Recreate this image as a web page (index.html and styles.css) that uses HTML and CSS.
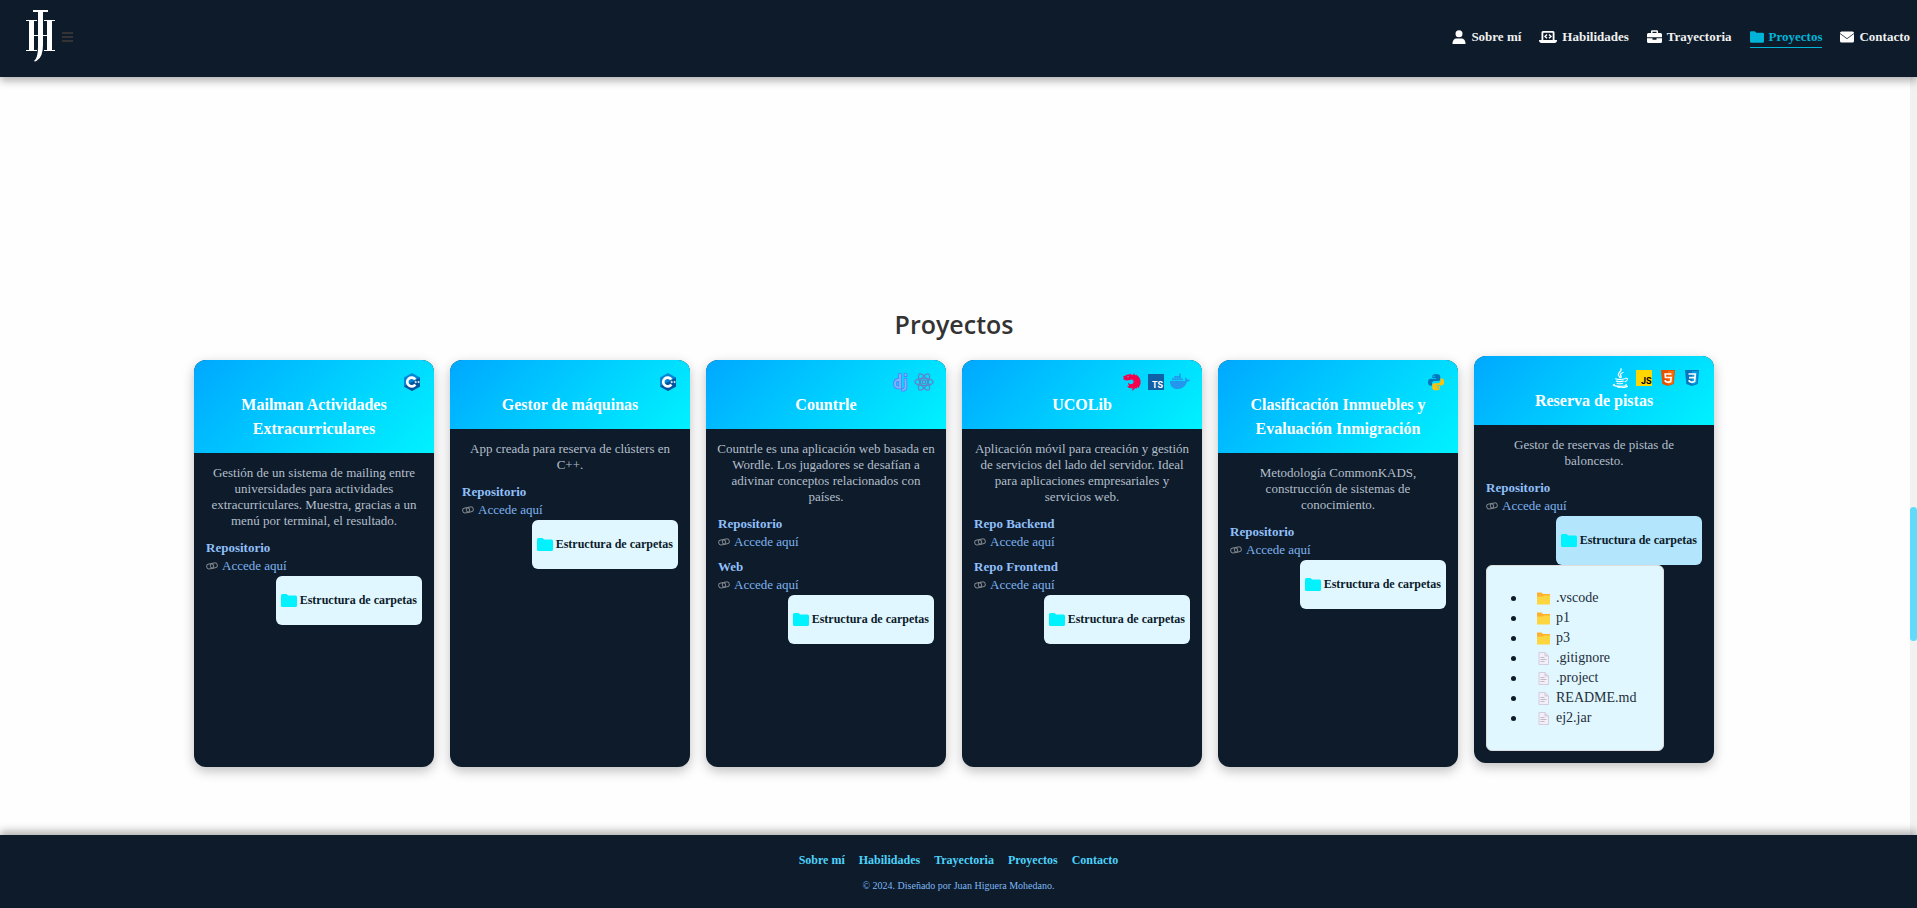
FILE: index.html
```html
<!DOCTYPE html>
<html lang="es">
<head>
<meta charset="utf-8">
<meta name="viewport" content="width=device-width, initial-scale=1">
<title>Proyectos</title>
<link rel="stylesheet" href="styles.css">
</head>
<body>
<svg class="sprite" aria-hidden="true">
  <symbol id="link" viewBox="0 0 12 8"><g fill="none" stroke="#84898e" stroke-width="1"><rect x=".6" y="1.8" width="7" height="5" rx="2.5" transform="rotate(-8 4 4)"/><rect x="4.4" y="1" width="7" height="5" rx="2.5" transform="rotate(-8 8 4)"/></g></symbol>
  <symbol id="folder" viewBox="0 0 16 13"><path d="M1.5 0h4l1.7 1.5h7.3A1.5 1.5 0 0 1 16 3v8.500a1.500 1.500 0 0 1-1.500 1.500h-13A1.500 1.500 0 0 1 0 11.500v-10A1.500 1.500 0 0 1 1.500 0z" fill="currentColor"/></symbol>
  <symbol id="dir" viewBox="0 0 13 13"><path d="M0 .500h4.500L6 2H13v4H0z" fill="#ffb02e"/><path d="M0 4.500h5.500L7 3.500h6v9H0z" fill="#fcd53f"/></symbol>
  <symbol id="file" viewBox="0 0 13 13"><path d="M2 .5h6L11.500 4v8.500H2z" fill="#f3eef8" stroke="#cdc4d6" stroke-width=".8"/><path d="M8 .5V4h3.500" fill="#e1d8ec" stroke="#cdc4d6" stroke-width=".8"/><path d="M3.500 5.500h4M3.500 7.500h6M3.500 9.500h4" stroke="#b4acbc" stroke-width=".8"/></symbol>
  <symbol id="cpp" viewBox="0 0 20 20"><path d="M10 1l8 4.500v9L10 19l-8-4.500v-9z" fill="#0086d4"/><path d="M18 5.500v9L10 19l-8-4.500L10 10z" fill="#00549d"/><path d="M13.300 7.600a4.400 4.400 0 1 0 0 4.800" fill="none" stroke="#fff" stroke-width="2.700"/><path d="M12.500 10h2.400M13.700 8.800v2.400M15.500 10h2.200M16.600 8.900v2.200" stroke="#fff" stroke-width=".8"/></symbol>
  <symbol id="react" viewBox="0 0 20 20"><g fill="none" stroke="#5f84c8" stroke-width="1.300"><ellipse cx="10" cy="10" rx="9.200" ry="3.700"/><ellipse cx="10" cy="10" rx="9.200" ry="3.700" transform="rotate(60 10 10)"/><ellipse cx="10" cy="10" rx="9.200" ry="3.700" transform="rotate(120 10 10)"/><circle cx="10" cy="10" r="1.800"/></g></symbol>
  <symbol id="django" viewBox="0 0 20 20"><g fill="none" stroke-linecap="square"><g stroke="#5b7cff" stroke-width="3.600"><path d="M10 3v12.500H7.500a4 4 0 0 1 0-7.500H9M15.500 8v7.500q0 2-2.500 2.300M15.500 3v.1"/></g><g stroke="#79b8ff" stroke-width="1.800"><path d="M10 3v12.500H7.500a4 4 0 0 1 0-7.500H9M15.500 8v7.500q0 2-2.500 2.300M15.500 3v.1"/></g></g></symbol>
  <symbol id="nest" viewBox="0 0 20 20"><path d="M11.800 1c.8.600 1 1.200.800 1.900l1.600.3.900-.7.200 1.300c1.900 1.100 3.200 3.200 3.300 5.700.1 3-1 5.400-3 7l.4-1.900-2.300 2.700.2-1.700c-1.300 1.600-2.400 2.600-4.200 3.200.8-1 1-1.900.6-2.800-1.900.8-4.400.1-5.400-2.200.8.500 1.600.5 2.300 0-1-.8-1.300-2.100-.7-3.200.9 1.700 2.400 2 4 1.100 1.200-.7 1.500-2 .5-3.400-.5-.7-1.400-.8-2.300-.6C6.800 8.200 4.800 9 2.600 8L1 6.300l1.200-.5L.8 4.400C3 4.100 4 2.900 6.200 2.300l1.600.2 1-1 .6 1.400c1.700.2 2.600-.4 2.400-1.900z" fill="#f5004d"/><circle cx="6" cy="4.800" r=".7" fill="#00d5ff"/></symbol>
  <symbol id="docker" viewBox="0 0 20 20"><path d="M0 9h15.300c0-1.500-.3-2.500.3-3.700 1 .7 1.400 1.400 1.500 2.400 1-.2 2-.1 2.900.4-.6 1.100-1.600 1.700-3 1.700C15.500 14 12.500 17 7.500 17 3 17 0 14.500 0 9z" fill="#2496ed"/><path d="M2 7.300h11M4.400 5h6.500M9 2.800h2.100" stroke="#2496ed" stroke-width="1.900" stroke-dasharray="2 .2"/></symbol>
  <symbol id="python" viewBox="0 0 20 20"><path d="M10 2C7 2 6.300 3 6.300 4.400V6H10v.8H4.600C3 6.800 2 8 2 10.300s1 3.400 2.400 3.400H6V11.600C6 10 7 9 8.500 9h3.700c1.300 0 2-.8 2-2V4.400C14.200 2.900 13 2 10 2z" fill="#0277bd"/><path d="M10 18.300c3 0 4-1 4-2.400v-1.600h-3.700v-.8h5.300c1.600 0 2.600-1.200 2.600-3.500s-1-3.400-2.400-3.400h-1.300v2.200c0 1.600-1 2.500-2.500 2.500H8.300c-1.300 0-2 .8-2 2v2.600c0 1.500 1.200 2.400 3.700 2.400z" fill="#ffc107"/><circle cx="8" cy="4.200" r=".8" fill="#08d0ff"/><circle cx="12.200" cy="16" r=".8" fill="#08d0ff"/></symbol>
  <symbol id="java" viewBox="0 0 20 20"><g fill="none" stroke="#fff" stroke-linecap="round"><path d="M11 .8c1 2.500-3.500 4-2.600 6.200.3.900 1.200 1.600 1.500 2.600M13 4.500c-2 .8-3 1.800-2.200 3.100.5.900.5 1.400 0 2" stroke-width="1.300"/><path d="M6 10.500c-1.500.9 6 1.400 8.500.3M6.300 13c1 .8 5 .8 7.200.1M7 15.200c1.400.7 4 .6 5.700 0M15.500 10.300c3-.5 2.300 2.600-.6 3.400M4.500 16.300c-4 1.200 3 2.300 7.500 2 4-.2 5.500-1.200 4-1.900M8 19.600c4 .4 8-.2 9.500-1.300" stroke-width="1.100"/></g></symbol>
  <symbol id="html" viewBox="0 0 20 20"><path d="M3 2h14l-1.300 14L10 18l-5.700-2z" fill="#e65100"/><path d="M10 3h6l-1.200 12.200L10 17z" fill="#ff6d00"/><path d="M13.500 6H7.200l.3 3.500h5.600l-.4 4-2.700.9-2.600-.9-.1-1.500" fill="none" stroke="#fff" stroke-width="1.700"/></symbol>
  <symbol id="css" viewBox="0 0 20 20"><path d="M3 2h14l-1.300 14L10 18l-5.700-2z" fill="#0277bd"/><path d="M10 3h6l-1.200 12.200L10 17z" fill="#039be5"/><path d="M6.500 6h6.800l-.7 7.500-2.600.9-2.600-.9-.1-1.500M7 9.600h6" fill="none" stroke="#fff" stroke-width="1.700"/></symbol>
</svg>

<header class="topbar">
  <div class="brand">
    <svg class="logo" viewBox="0 0 30 54" role="img" aria-label="JH">
      <g fill="#fff"><rect x="3" y="11" width="5" height="30"/><rect x="21" y="11" width="5" height="30"/><rect x="0" y="10" width="11" height="1"/><rect x="18" y="10" width="11" height="1"/><rect x="0" y="40" width="11" height="1"/><rect x="18" y="40" width="11" height="1"/><rect x="7" y="25" width="15" height="1"/><rect x="7" y="0" width="15" height="2"/></g>
      <path d="M12 1h5v34q0 12-6 15.500-2 1.500-3 .5 4-3 4-14z" fill="#fff"/>
    </svg>
    <button class="menu" aria-label="Menú"><span></span><span></span><span></span></button>
  </div>
  <nav class="nav" aria-label="Principal">
    <a href="#sobre-mi"><svg width="14" height="14" viewBox="0 0 14 14"><circle cx="7" cy="3.700" r="3.500"/><path d="M.5 14c0-4 2-5.500 4-5.500h5c2 0 4 1.500 4 5.500z"/></svg>Sobre mí</a>
    <a href="#habilidades"><svg width="18" height="14" viewBox="0 0 18 14"><path fill-rule="evenodd" d="M2.500 2.500A1.500 1.500 0 0 1 4 1h10a1.500 1.500 0 0 1 1.500 1.500V10H18q0 3-2.500 3h-13Q0 13 0 10h2.500zM4.300 2.800V10h9.400V2.800z"/><path d="M8 4.500L6 6.400l2 1.900M10 4.500l2 1.900-2 1.900" fill="none" stroke="#fff" stroke-width="1.400"/></svg>Habilidades</a>
    <a href="#trayectoria"><svg width="15" height="14" viewBox="0 0 15 14"><path fill-rule="evenodd" d="M4 3V1.500Q4 .3 5.200.3h4.600Q11 .3 11 1.500V3h2.500Q15 3 15 4.500V7.300H0V4.500Q0 3 1.500 3zM5.500 3h4V1.700h-4z"/><path d="M0 8.300h5.500v1.500h4V8.300H15v3.200q0 1.500-1.500 1.500h-12Q0 13 0 11.500z"/></svg>Trayectoria</a>
    <a href="#proyectos" class="active" aria-current="page"><svg width="14" height="12"><use href="#folder"/></svg>Proyectos</a>
    <a href="#contacto"><svg width="14" height="14" viewBox="0 0 14 14"><rect y="1.500" width="14" height="11" rx="1.500"/><path d="M0 3.500l7 5.200 7-5.200" fill="none" stroke="#0d1b2a" stroke-width=".8"/></svg>Contacto</a>
  </nav>
</header>

<div class="page">
  <main class="content" id="proyectos">
    <h1 class="heading">Proyectos</h1>
    <div class="cards">
      <article class="card">
        <div class="card-head"><div class="techs"><svg><use href="#cpp"/></svg></div><h2>Mailman Actividades Extracurriculares</h2></div>
        <div class="card-body">
          <p class="desc">Gestión de un sistema de mailing entre universidades para actividades extracurriculares. Muestra, gracias a un menú por terminal, el resultado.</p>
          <div class="repos"><div><h3>Repositorio</h3><a href="#r1"><svg><use href="#link"/></svg>Accede aquí</a></div></div>
          <button class="toggle"><svg><use href="#folder"/></svg>Estructura de carpetas</button>
        </div>
      </article>
      <article class="card">
        <div class="card-head"><div class="techs"><svg><use href="#cpp"/></svg></div><h2>Gestor de máquinas</h2></div>
        <div class="card-body">
          <p class="desc">App creada para reserva de clústers en C++.</p>
          <div class="repos"><div><h3>Repositorio</h3><a href="#r2"><svg><use href="#link"/></svg>Accede aquí</a></div></div>
          <button class="toggle"><svg><use href="#folder"/></svg>Estructura de carpetas</button>
        </div>
      </article>
      <article class="card">
        <div class="card-head"><div class="techs"><svg><use href="#django"/></svg><svg><use href="#react"/></svg></div><h2>Countrle</h2></div>
        <div class="card-body">
          <p class="desc">Countrle es una aplicación web basada en Wordle. Los jugadores se desafían a adivinar conceptos relacionados con países.</p>
          <div class="repos"><div><h3>Repositorio</h3><a href="#r3"><svg><use href="#link"/></svg>Accede aquí</a></div><div><h3>Web</h3><a href="#w3"><svg><use href="#link"/></svg>Accede aquí</a></div></div>
          <button class="toggle"><svg><use href="#folder"/></svg>Estructura de carpetas</button>
        </div>
      </article>
      <article class="card">
        <div class="card-head"><div class="techs"><svg><use href="#nest"/></svg><svg viewBox="0 0 20 20"><rect x="2" y="2" width="16" height="16" fill="#1160a6"/><text x="6" y="16" class="ts-text">TS</text></svg><svg><use href="#docker"/></svg></div><h2>UCOLib</h2></div>
        <div class="card-body">
          <p class="desc">Aplicación móvil para creación y gestión de servicios del lado del servidor. Ideal para aplicaciones empresariales y servicios web.</p>
          <div class="repos"><div><h3>Repo Backend</h3><a href="#b4"><svg><use href="#link"/></svg>Accede aquí</a></div><div><h3>Repo Frontend</h3><a href="#f4"><svg><use href="#link"/></svg>Accede aquí</a></div></div>
          <button class="toggle"><svg><use href="#folder"/></svg>Estructura de carpetas</button>
        </div>
      </article>
      <article class="card">
        <div class="card-head"><div class="techs"><svg><use href="#python"/></svg></div><h2>Clasificación Inmuebles y Evaluación Inmigración</h2></div>
        <div class="card-body">
          <p class="desc">Metodología CommonKADS, construcción de sistemas de conocimiento.</p>
          <div class="repos"><div><h3>Repositorio</h3><a href="#r5"><svg><use href="#link"/></svg>Accede aquí</a></div></div>
          <button class="toggle"><svg><use href="#folder"/></svg>Estructura de carpetas</button>
        </div>
      </article>
      <article class="card raised">
        <div class="card-head"><div class="techs"><svg><use href="#java"/></svg><svg viewBox="0 0 20 20"><rect x="2" y="2" width="16" height="16" fill="#ffd600"/><text x="7" y="16" class="js-text">JS</text></svg><svg><use href="#html"/></svg><svg><use href="#css"/></svg></div><h2>Reserva de pistas</h2></div>
        <div class="card-body">
          <p class="desc">Gestor de reservas de pistas de baloncesto.</p>
          <div class="repos"><div><h3>Repositorio</h3><a href="#r6"><svg><use href="#link"/></svg>Accede aquí</a></div></div>
          <button class="toggle open" aria-expanded="true"><svg><use href="#folder"/></svg>Estructura de carpetas</button>
          <ul class="tree">
            <li><svg><use href="#dir"/></svg>.vscode</li>
            <li><svg><use href="#dir"/></svg>p1</li>
            <li><svg><use href="#dir"/></svg>p3</li>
            <li><svg><use href="#file"/></svg>.gitignore</li>
            <li><svg><use href="#file"/></svg>.project</li>
            <li><svg><use href="#file"/></svg>README.md</li>
            <li><svg><use href="#file"/></svg>ej2.jar</li>
          </ul>
        </div>
      </article>
    </div>
  </main>
  <div class="track" aria-hidden="true"><div class="thumb"></div></div>
</div>

<footer class="footer">
  <nav class="footer-links" aria-label="Pie">
    <a href="#sobre-mi">Sobre mí</a><a href="#habilidades">Habilidades</a><a href="#trayectoria">Trayectoria</a><a href="#proyectos">Proyectos</a><a href="#contacto">Contacto</a>
  </nav>
  <p>© 2024. Diseñado por Juan Higuera Mohedano.</p>
</footer>
</body>
</html>
```
FILE: styles.css
```css
* { box-sizing: border-box; }

body {
  margin: 0;
  min-height: 100vh;
  display: flex;
  flex-direction: column;
  font-family: "Liberation Serif", serif;
  background: #fefefe;
  color: #333;
}

h1, h2, h3, p, ul { margin: 0; padding: 0; }
a { text-decoration: none; }
button { font: inherit; border: 0; cursor: pointer; }
svg { flex: none; }
.sprite { position: absolute; width: 0; height: 0; }
.ts-text, .js-text { font: bold 9px Roboto, sans-serif; fill: #fff; }
.js-text { fill: #000; }

.topbar {
  position: relative;
  z-index: 2;
  display: flex;
  justify-content: space-between;
  align-items: flex-start;
  padding: 10px 7px 13px 26px;
  background: #0d1b2a;
  box-shadow: 0 4px 8px rgba(0, 0, 0, .3);
}
.brand { display: flex; gap: 6px; }
.logo { width: 30px; height: 54px; }
.menu {
  display: grid;
  gap: 2px;
  align-self: flex-start;
  margin-top: 22px;
  padding: 0;
  width: 11px;
  background: none;
}
.menu span { height: 2px; background: #333; }

.nav { display: flex; gap: 18px; padding-top: 16px; }
.nav a {
  display: flex;
  align-items: center;
  gap: 5px;
  height: 22px;
  color: #f0f0f0;
  font-size: 13px;
  line-height: 20px;
  font-weight: bold;
}
.nav svg { fill: #fff; }
.nav .active { color: #00b4d8; border-bottom: 1px solid #00b4d8; }

.page { flex: 1; display: flex; }
.content {
  flex: 1;
  display: flex;
  flex-direction: column;
  justify-content: flex-end;
  align-items: center;
  padding: 0 18px 68px 16px;
}
.heading {
  margin-bottom: 16px;
  font: 600 25px/40px "Open Sans", sans-serif;
  color: #333;
}
.cards {
  width: 100%;
  max-width: 1520px;
  display: grid;
  grid-template-columns: repeat(6, minmax(0, 1fr));
  gap: 16px;
}
.card {
  border-radius: 12px;
  overflow: hidden;
  background: #0d1b2a;
  box-shadow: 0 4px 12px rgba(0, 0, 0, .25);
}
.raised { transform: translateY(-4px); }
.card-head {
  padding: 12px;
  background: linear-gradient(135deg, #00a8ff, #00f2ff);
  color: #fff;
  text-align: center;
}
.techs { display: flex; justify-content: flex-end; gap: 4px; margin-bottom: 1px; }
.techs svg { width: 20px; height: 20px; }
.card h2 { font-size: 16px; line-height: 24px; }
.card-body { display: flex; flex-direction: column; padding: 12px; }
.desc {
  margin: 0 -2px 11px;
  color: #b4bfca;
  font-size: 13px;
  line-height: 16px;
  text-align: center;
}
.repos { display: grid; gap: 7px; }
.repos h3 { color: #90bff9; font-size: 13px; line-height: 16px; }
.repos a {
  display: flex;
  align-items: center;
  gap: 4px;
  color: #7fb2ee;
  font-size: 13px;
  line-height: 20px;
}
.repos svg { width: 12px; height: 8px; }

.toggle {
  align-self: flex-end;
  display: flex;
  align-items: center;
  gap: 3px;
  height: 49px;
  padding: 0 5px;
  border-radius: 6px;
  background: #e0f7ff;
  color: #0d1b2a;
  font-size: 12px;
  font-weight: bold;
}
.toggle svg { width: 16px; height: 13px; color: #00f2ff; }
.toggle.open { background: #b3e5fc; }

.tree {
  align-self: flex-start;
  min-width: 178px;
  padding: 22px 24px;
  border: 1px solid #ddd;
  border-radius: 6px;
  background: #e0f7ff;
  list-style: none;
}
.tree li {
  display: flex;
  align-items: center;
  gap: 6px;
  color: #1f2d3a;
  font-size: 14px;
  line-height: 20px;
}
.tree li::before {
  content: "";
  width: 5px;
  height: 5px;
  margin-right: 15px;
  border-radius: 50%;
  background: #0d1b2a;
}
.tree svg { width: 13px; height: 13px; }

.track { width: 7px; background: #f1f1f1; padding-top: 430px; }
.thumb { height: 134px; border-radius: 4px; background: #61dafb; }

.footer {
  position: relative;
  display: grid;
  gap: 8px;
  justify-items: center;
  padding: 15px 16px 14px;
  background: #0d1b2a;
  box-shadow: 0 -4px 8px rgba(0, 0, 0, .3);
}
.footer-links { display: flex; gap: 14px; }
.footer-links a { color: #4dd2fb; font-size: 12px; line-height: 20px; font-weight: bold; }
.footer p { color: #7fb8f5; font-size: 10px; line-height: 16px; }
```
